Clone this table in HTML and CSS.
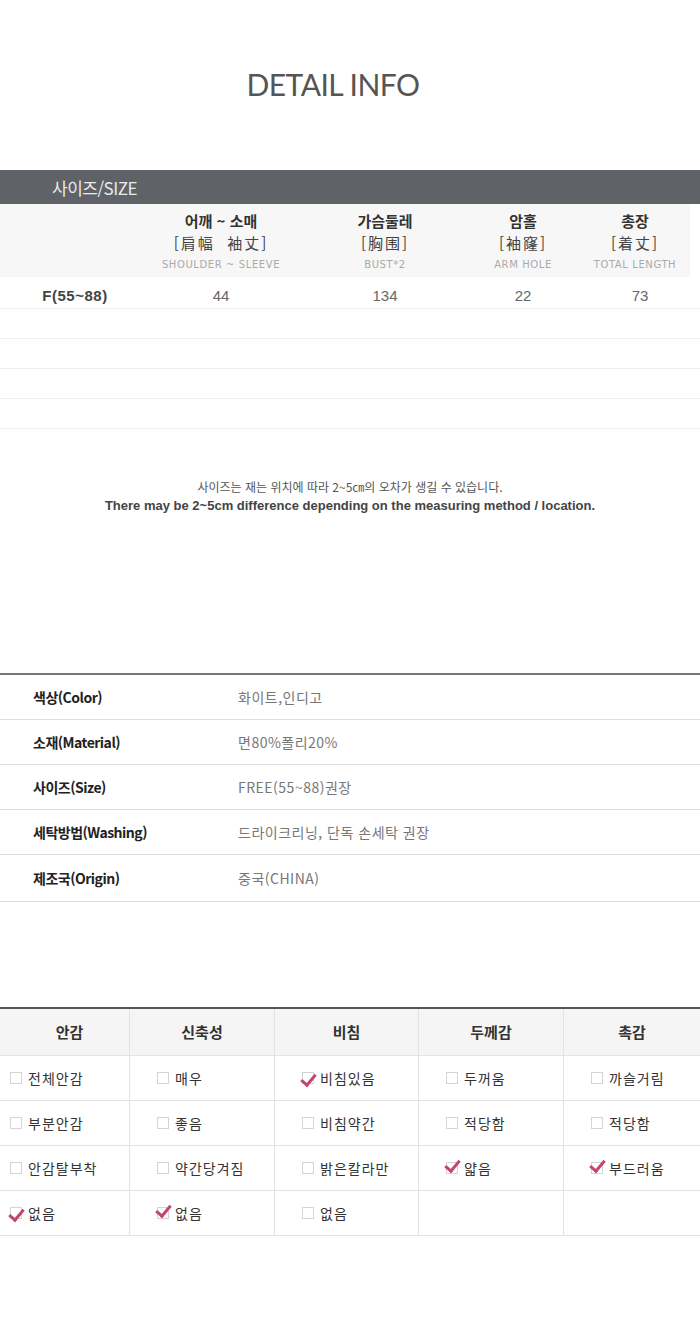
FILE: index.html
```html
<!DOCTYPE html>
<html lang="ko">
<head>
    <meta charset="UTF-8">
    <meta name="viewport" content="width=device-width, initial-scale=1.0">
    <title>DETAIL INFO</title>
    <link rel="stylesheet" href="styles.css">
</head>
<body>
    <h1 class="title">DETAIL INFO</h1>

    <!-- tabla de medidas -->
    <div class="size-bar">사이즈/SIZE</div>
    <div class="size-table">
        <div class="size-head">
            <div class="cell"></div>
            <div class="cell">
                <b>어깨 ~ 소매</b>
                <span class="hanja">[肩幅&nbsp;&nbsp;袖丈]</span>
                <small>SHOULDER ~ SLEEVE</small>
            </div>
            <div class="cell">
                <b>가슴둘레</b>
                <span class="hanja">[胸围]</span>
                <small>BUST*2</small>
            </div>
            <div class="cell">
                <b>암홀</b>
                <span class="hanja">[袖窿]</span>
                <small>ARM HOLE</small>
            </div>
            <div class="cell last">
                <b>총장</b>
                <span class="hanja">[着丈]</span>
                <small>TOTAL LENGTH</small>
            </div>
        </div>
        <div class="size-row">
            <div class="cell name">F(55~88)</div>
            <div class="cell">44</div>
            <div class="cell">134</div>
            <div class="cell">22</div>
            <div class="cell last">73</div>
        </div>
        <div class="size-row empty"></div>
        <div class="size-row empty"></div>
        <div class="size-row empty"></div>
        <div class="size-row empty"></div>
    </div>

    <div class="note">
        <p>사이즈는 재는 위치에 따라 2~5㎝의 오차가 생길 수 있습니다.</p>
        <p class="en">There may be 2~5cm difference depending on the measuring method / location.</p>
    </div>

    <!-- informacion del producto -->
    <div class="info-table">
        <div class="info-row"><span class="label">색상(Color)</span><span class="value">화이트,인디고</span></div>
        <div class="info-row"><span class="label">소재(Material)</span><span class="value">면80%폴리20%</span></div>
        <div class="info-row"><span class="label">사이즈(Size)</span><span class="value">FREE(55~88)권장</span></div>
        <div class="info-row"><span class="label">세탁방법(Washing)</span><span class="value">드라이크리닝, 단독 손세탁 권장</span></div>
        <div class="info-row"><span class="label">제조국(Origin)</span><span class="value">중국(CHINA)</span></div>
    </div>

    <!-- tabla de caracteristicas -->
    <div class="check-table">
        <div class="th">안감</div>
        <div class="th">신축성</div>
        <div class="th">비침</div>
        <div class="th">두께감</div>
        <div class="th">촉감</div>

        <div class="td"><i class="box"></i>전체안감</div>
        <div class="td"><i class="box"></i>매우</div>
        <div class="td"><i class="box on"></i>비침있음</div>
        <div class="td"><i class="box"></i>두꺼움</div>
        <div class="td"><i class="box"></i>까슬거림</div>

        <div class="td"><i class="box"></i>부분안감</div>
        <div class="td"><i class="box"></i>좋음</div>
        <div class="td"><i class="box"></i>비침약간</div>
        <div class="td"><i class="box"></i>적당함</div>
        <div class="td"><i class="box"></i>적당함</div>

        <div class="td"><i class="box"></i>안감탈부착</div>
        <div class="td"><i class="box"></i>약간당겨짐</div>
        <div class="td"><i class="box"></i>밝은칼라만</div>
        <div class="td"><i class="box on high"></i>얇음</div>
        <div class="td"><i class="box on high"></i>부드러움</div>

        <div class="td"><i class="box on"></i>없음</div>
        <div class="td"><i class="box on high"></i>없음</div>
        <div class="td"><i class="box"></i>없음</div>
        <div class="td"></div>
        <div class="td"></div>
    </div>
</body>
</html>
```

FILE: styles.css
```css
body {
    margin: 0;
    width: 700px;
    background-color: #fff;
    font-family: "Noto Sans CJK KR", "Noto Sans", sans-serif;
    color: #333;
}
.title {
    margin: 0;
    padding-top: 64px;
    height: 170px;
    box-sizing: border-box;
    text-align: center;
    font-family: Lato, "Noto Sans", sans-serif;
    font-size: 30px;
    font-weight: normal;
    line-height: 40px;
    color: #555;
    letter-spacing: -0.5px;
    padding-right: 34px;
}

/* tabla de medidas */
.size-bar {
    height: 34px;
    padding-left: 52px;
    background-color: #5f6368;
    color: #eaeaea;
    font-size: 17px;
    line-height: 36px;
    letter-spacing: -0.5px;
}
.size-head,
.size-row {
    display: grid;
    grid-template-columns: 150px 142px 186px 90px 1fr;
    text-align: center;
}
.size-head {
    background-color: #f7f7f7;
    padding: 6px 0 1px;
    margin-right: 10px;
}
.size-head .cell {
    display: flex;
    flex-direction: column;
}
.size-head b {
    font-size: 15px;
    line-height: 22px;
    color: #333;
}
.size-head .hanja {
    font-size: 15px;
    line-height: 22px;
    color: #444;
    letter-spacing: 2px;
}
.size-head small {
    font-family: "DejaVu Sans", sans-serif;
    font-size: 10px;
    line-height: 22px;
    color: #aaa;
    letter-spacing: 0.6px;
    white-space: nowrap;
}
.size-head .last,
.size-row .last {
    padding-left: 12px;
}
.size-row {
    height: 32px;
    border-bottom: 1px solid #eee;
    font-family: "Liberation Sans Narrow", "Liberation Sans", sans-serif;
    font-size: 15px;
    line-height: 38px;
    color: #666;
    box-sizing: border-box;
}
.size-row .name {
    font-weight: bold;
    color: #444;
    letter-spacing: 0.5px;
}
.size-row.empty {
    height: 30px;
}

/* nota */
.note {
    margin-top: 48px;
    height: 196px;
    text-align: center;
    color: #555;
}
.note p {
    margin: 0;
    font-size: 12px;
    line-height: 19px;
}
.note .en {
    font-family: "Liberation Sans", sans-serif;
    font-weight: bold;
    font-size: 13px;
    color: #444;
}

/* informacion del producto */
.info-table {
    border-top: 2px solid #777;
}
.info-row {
    display: flex;
    align-items: center;
    height: 45px;
    box-sizing: border-box;
    border-bottom: 1px solid #ddd;
    font-size: 14px;
}
.info-row:last-child {
    height: 47px;
}
.label {
    width: 205px;
    padding-left: 33px;
    font-family: "Liberation Sans Narrow", "Noto Sans CJK KR", sans-serif;
    font-weight: bold;
    color: #222;
    letter-spacing: -0.5px;
}
.value {
    color: #777;
    letter-spacing: 0.5px;
}

/* tabla de caracteristicas */
.check-table {
    margin-top: 105px;
    display: grid;
    grid-template-columns: 130px 145px 144px 145px 1fr;
    border-top: 2px solid #555;
    margin-bottom: 104px;
}
.th {
    height: 46px;
    background-color: #f5f5f5;
    border-bottom: 1px solid #e3e3e3;
    border-right: 1px solid #e3e3e3;
    font-size: 15px;
    font-weight: bold;
    line-height: 46px;
    text-align: center;
    color: #333;
}
.th:first-child {
    padding-left: 10px;
}
.td {
    display: flex;
    align-items: center;
    height: 45px;
    padding-left: 27px;
    box-sizing: border-box;
    border-bottom: 1px solid #e3e3e3;
    border-right: 1px solid #e3e3e3;
    font-size: 14px;
    color: #333;
    letter-spacing: 1px;
}
.th:nth-child(5n),
.td:nth-child(5n) {
    border-right: none;
}
.td:nth-child(5n+1) {
    padding-left: 10px;
}
.box {
    position: relative;
    width: 10px;
    height: 10px;
    margin-right: 6px;
    border: 1px solid #d4d4d4;
    flex-shrink: 0;
}
.box.on::after {
    content: "";
    position: absolute;
    left: 1px;
    top: -2px;
    width: 6px;
    height: 12px;
    border-right: 3px solid #c4466f;
    border-bottom: 3px solid #c4466f;
    transform: rotate(40deg);
}
.box.on.high::after {
    top: -6px;
}
```
